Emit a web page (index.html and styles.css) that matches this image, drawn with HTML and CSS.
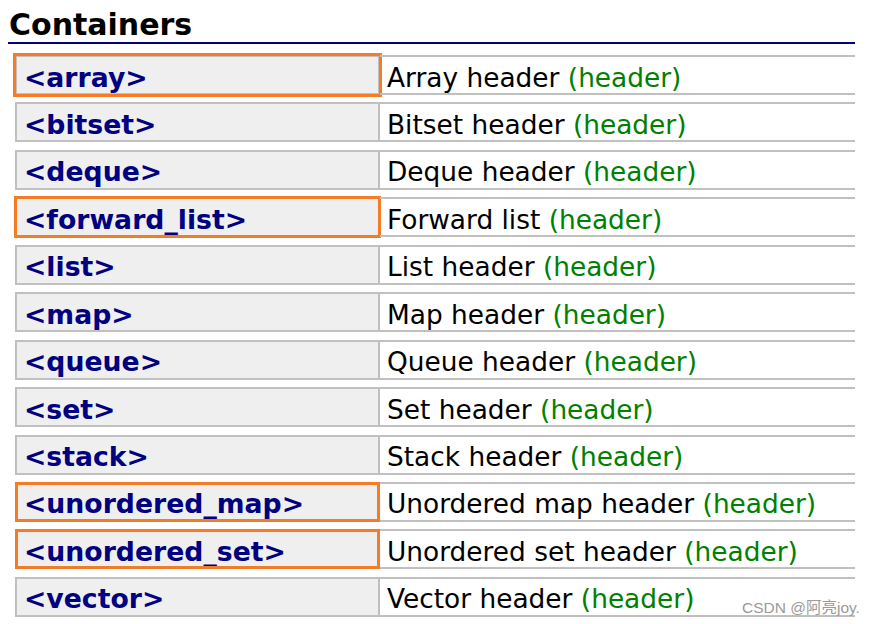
FILE: index.html
```html
<!DOCTYPE html>
<html lang="en">
<head>
<meta charset="utf-8">
<title>Containers</title>
<link rel="stylesheet" href="styles.css">
</head>
<body>
<div class="page">
  <h2 class="title">Containers</h2>
  <div class="list">
    <div class="row marked mark-a"><div class="name">&lt;array&gt;</div><div class="desc"><span>Array header <span class="tag">(header)</span></span></div></div>
    <div class="row"><div class="name">&lt;bitset&gt;</div><div class="desc"><span>Bitset header <span class="tag">(header)</span></span></div></div>
    <div class="row"><div class="name">&lt;deque&gt;</div><div class="desc"><span>Deque header <span class="tag">(header)</span></span></div></div>
    <div class="row marked mark-b"><div class="name">&lt;forward_list&gt;</div><div class="desc"><span>Forward list <span class="tag">(header)</span></span></div></div>
    <div class="row"><div class="name">&lt;list&gt;</div><div class="desc"><span>List header <span class="tag">(header)</span></span></div></div>
    <div class="row"><div class="name">&lt;map&gt;</div><div class="desc"><span>Map header <span class="tag">(header)</span></span></div></div>
    <div class="row"><div class="name">&lt;queue&gt;</div><div class="desc"><span>Queue header <span class="tag">(header)</span></span></div></div>
    <div class="row"><div class="name">&lt;set&gt;</div><div class="desc"><span>Set header <span class="tag">(header)</span></span></div></div>
    <div class="row"><div class="name">&lt;stack&gt;</div><div class="desc"><span>Stack header <span class="tag">(header)</span></span></div></div>
    <div class="row marked mark-c"><div class="name">&lt;unordered_map&gt;</div><div class="desc"><span>Unordered map header <span class="tag">(header)</span></span></div></div>
    <div class="row marked mark-c"><div class="name">&lt;unordered_set&gt;</div><div class="desc"><span>Unordered set header <span class="tag">(header)</span></span></div></div>
    <div class="row"><div class="name">&lt;vector&gt;</div><div class="desc"><span>Vector header <span class="tag">(header)</span></span></div></div>
  </div>
  <div class="watermark">CSDN @阿亮joy.</div>
</div>
</body>
</html>
```
FILE: styles.css
```css
html, body {
  margin: 0;
  padding: 0;
  background: #ffffff;
}

.page {
  position: relative;
  width: 873px;
  height: 624px;
  overflow: hidden;
  font-family: "DejaVu Sans", Verdana, sans-serif;
}

.title {
  margin: 0 0 0 8px;
  width: 847px;
  padding: 8px 0 0 1px;
  box-sizing: border-box;
  font-size: 30px;
  line-height: 34px;
  font-weight: bold;
  color: #000000;
  border-bottom: 2px solid #000080;
}

.list {
  display: flex;
  flex-direction: column;
  gap: 7.45px;
  margin: 11px 0 0 15px;
  width: 840px;
}

.row {
  display: grid;
  grid-template-columns: 365px 475px;
  height: 40px;
}

.name,
.desc {
  display: flex;
  align-items: center;
  box-sizing: border-box;
  padding-top: 4px;
  white-space: nowrap;
  border-top: 2px solid #c0c0c0;
  border-bottom: 2px solid #c0c0c0;
}

.name {
  background: #efefef;
  border-left: 2px solid #c0c0c0;
  border-right: 2px solid #c0c0c0;
  padding-left: 7px;
  font-size: 26.7px;
  font-weight: bold;
  color: #000080;
}

.desc {
  padding-left: 7px;
  font-size: 26.4px;
  color: #000000;
}

.tag {
  color: #008000;
}

.marked .name {
  outline: 3px solid #f67b27;
}

.mark-a .name {
  outline-offset: -1px;
}

.mark-b .name {
  outline-offset: -2px;
}

.mark-c .name {
  outline-offset: -3px;
}

.watermark {
  position: absolute;
  left: 742px;
  top: 595px;
  font-family: "Liberation Sans", "Noto Sans CJK SC", sans-serif;
  font-size: 15.5px;
  color: #9a9a9a;
  white-space: nowrap;
}
```
